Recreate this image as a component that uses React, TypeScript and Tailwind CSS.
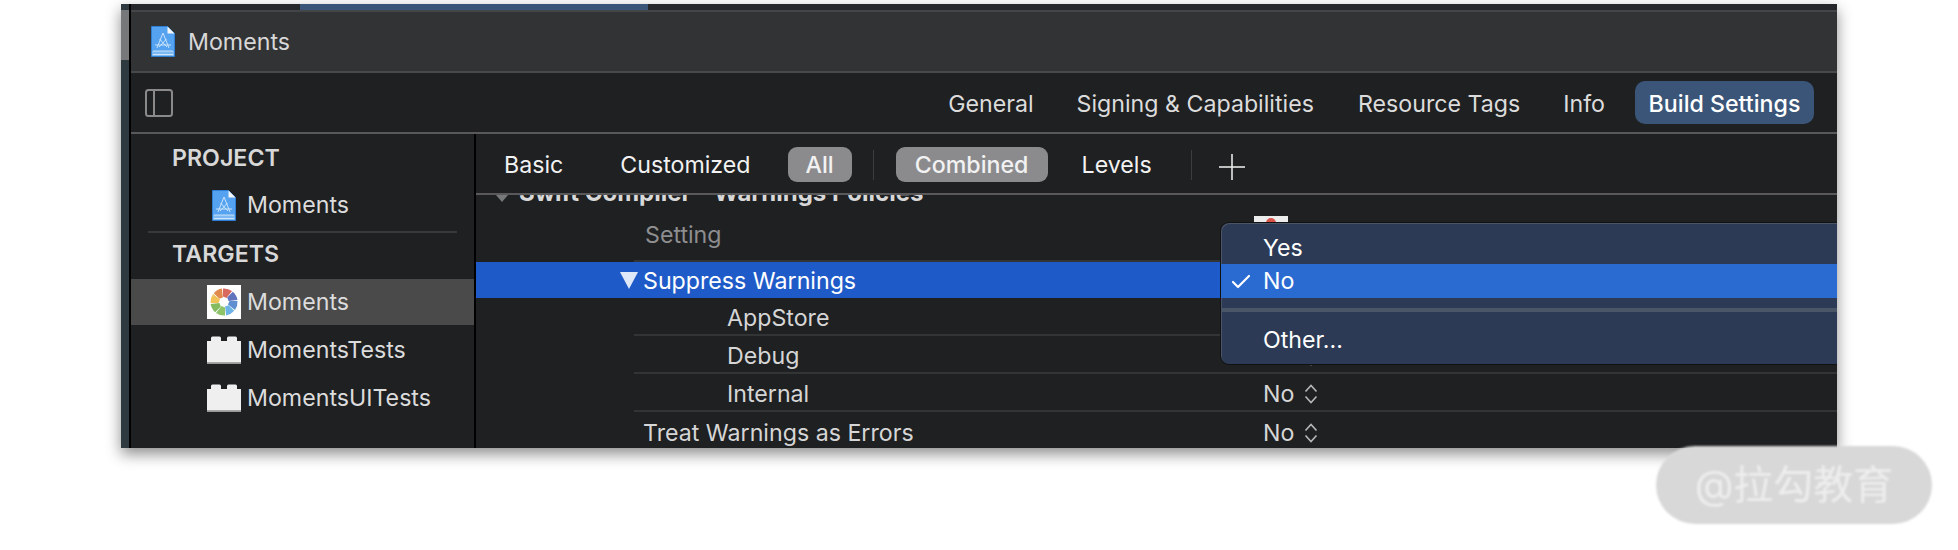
import { Check } from 'lucide-react'

const FONT = { fontFamily: 'Inter, "Noto Sans CJK SC", sans-serif' }

function ProjectIcon() {
  return (
    <svg width="24" height="31" viewBox="0 0 24 31" className="shrink-0">
      <path d="M0.5 0.500h16l7 7v23h-23z" fill="#55a3f0" stroke="#2f7fd6" />
      <path d="M16.500 0.500v7h7z" fill="#f4f6f8" />
      <path d="M1 25h22v5H1z" fill="#7cb9f3" />
      <path d="M2 25h20M2 28.500h20" stroke="#e3f0fc" strokeWidth="0.800" />
      <path d="M12 7 6 22M12 7l6 15M4 19h16M8.500 13l7.500 8M15.500 13 8 21" stroke="#d6e9fb" strokeWidth="0.900" fill="none" />
    </svg>
  )
}

function ApertureIcon() {
  const colors = ['#d9695f', '#6274bd', '#5f8fd0', '#6db3e6', '#8fc46b', '#85bb60', '#efc357', '#e08a4e']
  return (
    <div className="flex h-[34px] w-[34px] shrink-0 items-center justify-center bg-white">
      <svg width="28" height="28" viewBox="-14 -14 28 28">
        {colors.map((c, i) => (
          <path
            key={c}
            d="M-1 -13.500A13.800 13.800 0 0 1 8 -11L2.500 -4L-1 -5.500z"
            fill={c}
            transform={`rotate(${i * 45})`}
          />
        ))}
      </svg>
    </div>
  )
}

function LegoIcon() {
  return (
    <svg width="34" height="28" viewBox="0 0 34 28" className="shrink-0">
      <path d="M4 5V2a1.500 1.500 0 0 1 1.500-1.500h7A1.500 1.500 0 0 1 14 2v3h6V2a1.500 1.500 0 0 1 1.500-1.500h7A1.500 1.500 0 0 1 30 2v3h4v22.500H0V5z" fill="#efefef" />
      <path d="M0 26.800h34" stroke="#a8a8a8" strokeWidth="1.400" />
    </svg>
  )
}

function UpDown() {
  return (
    <svg width="16" height="22" viewBox="0 0 16 22" fill="none" stroke="#b8b8b8" strokeWidth="1.600" className="shrink-0">
      <path d="M2.500 8.500 8 2.500l5.500 6M2.500 13.500 8 19.500l5.500-6" />
    </svg>
  )
}

function SidebarRow({ icon, label, active }: { icon: React.ReactNode; label: string; active?: boolean }) {
  return (
    <div className={`flex h-[46px] items-center gap-[6px] pl-[76px] ${active ? 'bg-[#4a4a4a]' : ''}`}>
      {icon}
      <span className="pt-[1px] text-[23.200px] text-[#dcdcdc]">{label}</span>
    </div>
  )
}

function SettingRow({ label, value, indent, line, stepper }: { label: string; value?: string; indent?: boolean; line?: boolean; stepper?: boolean }) {
  return (
    <div className={`ml-[158px] flex h-[38px] shrink-0 items-center ${line ? 'border-b-2 border-[#333436]' : ''}`}>
      <span className={`w-[629px] pt-[4px] text-[23.200px] text-[#d6d6d6] ${indent ? 'pl-[93px]' : 'pl-[9px]'}`}>{label}</span>
      <span className="flex w-[56px] items-center justify-between pt-[4px] text-[23.200px] text-[#d6d6d6]">
        <span>{value}</span>
        {stepper && <UpDown />}
      </span>
    </div>
  )
}

export default function App() {
  return (
    <div className="relative h-[550px] w-[1958px] overflow-hidden bg-white" style={FONT}>
      <div className="ml-[121px] pt-[4px]">
        <div className="flex h-[444px] w-[1716px] overflow-hidden shadow-[0_6px_14px_rgba(0,0,0,0.45)]">
          {/* left edge strip */}
          <div className="flex w-[10px] shrink-0 flex-col border-r-2 border-black bg-[#2f3a40]">
            <div className="mt-[6px] h-[50px] bg-[#77787a]" />
          </div>

          <div className="flex min-w-0 flex-1 flex-col bg-[#1f2022]">
            {/* tab strip */}
            <div className="h-[8px] shrink-0 border-b-2 border-[#444547] bg-[#26272a]">
              <div className="ml-[169px] h-full w-[348px] bg-[#3a5578]" />
            </div>

            {/* title bar */}
            <div className="flex h-[61px] shrink-0 items-center gap-[13px] border-b-2 border-[#48494b] bg-[#323335] pl-[20px]">
              <ProjectIcon />
              <span className="pt-[2px] text-[23.200px] text-[#d8d8d8]">Moments</span>
            </div>

            {/* editor tabs */}
            <div className="flex h-[61px] shrink-0 items-center justify-between border-b-2 border-[#59595b] pl-[14px] pr-[23px]">
              <svg width="28" height="28" viewBox="0 0 28 28" fill="none" stroke="#8a8a8a" strokeWidth="2">
                <rect x="1" y="1" width="26" height="26" rx="2.500" />
                <path d="M9 1v26" />
              </svg>
              <div className="flex items-center text-[23.200px] text-[#dcdcdc]">
                <span className="pt-[4px]">General</span>
                <span className="ml-[43px] pt-[4px]">Signing &amp; Capabilities</span>
                <span className="ml-[44px] pt-[4px]">Resource Tags</span>
                <span className="ml-[43px] pt-[4px]">Info</span>
                <span className="ml-[30px] flex h-[43px] w-[179px] items-center justify-center rounded-[10px] bg-[#3a5578] pt-[3px] font-medium text-white">
                  Build Settings
                </span>
              </div>
            </div>

            <div className="flex min-h-0 flex-1">
              {/* navigator */}
              <div className="w-[345px] shrink-0 border-r-2 border-black">
                <div className="pl-[41px] pt-[10px] text-[23.200px] font-semibold leading-[28px] text-[#d8d8d8]">PROJECT</div>
                <div className="flex h-[54px] items-center gap-[11px] pl-[81px] pt-[12px]">
                  <ProjectIcon />
                  <span className="pt-[1px] text-[23.200px] text-[#dcdcdc]">Moments</span>
                </div>
                <div className="mx-[17px] mt-[5px] h-[2px] bg-[#38393b]" />
                <div className="pl-[41px] pt-[7px] text-[23.200px] font-semibold leading-[28px] text-[#d8d8d8]">TARGETS</div>
                <div className="mt-[11px]">
                  <SidebarRow icon={<ApertureIcon />} label="Moments" active />
                </div>
                <div className="mt-[2px]">
                  <SidebarRow icon={<LegoIcon />} label="MomentsTests" />
                </div>
                <div className="mt-[2px]">
                  <SidebarRow icon={<LegoIcon />} label="MomentsUITests" />
                </div>
              </div>

              {/* build settings */}
              <div className="flex min-w-0 flex-1 flex-col">
                <div className="flex h-[61px] shrink-0 items-center border-b-2 border-[#59595b] pl-[28px] pt-[2px] text-[23.200px] text-[#f2f2f2]">
                  <span className="pt-[2px]">Basic</span>
                  <span className="ml-[57px] pt-[2px]">Customized</span>
                  <span className="ml-[37px] flex h-[35px] w-[64px] items-center justify-center rounded-[9px] bg-[#8b8b8e] pt-[1px] font-medium">All</span>
                  <span className="ml-[21px] h-[30px] w-[1px] bg-[#3c3d3f]" />
                  <span className="ml-[22px] flex h-[35px] w-[152px] items-center justify-center rounded-[9px] bg-[#8b8b8e] pt-[1px] font-medium">Combined</span>
                  <span className="ml-[34px] pt-[2px]">Levels</span>
                  <span className="ml-[39px] h-[30px] w-[1px] bg-[#3c3d3f]" />
                  <svg width="26" height="26" viewBox="0 0 26 26" stroke="#f2f2f2" strokeWidth="1.500" className="ml-[27px] mt-[4px]">
                    <path d="M13 0v26M0 13h26" />
                  </svg>
                </div>

                <div className="flex min-h-0 flex-1 flex-col overflow-hidden">
                  {/* heading clipped by the filter bar */}
                  <div className="-mt-[15px] flex h-[26px] shrink-0 items-center text-[24px] font-bold text-[#d8d8d8]">
                    <span className="ml-[20px] mr-[11px] mt-[10px] h-0 w-0 border-x-[6px] border-t-[7px] border-x-transparent border-t-[#77787a]" />
                    Swift Compiler - Warnings Policies
                  </div>
                  <div className="ml-[158px] flex h-[56px] shrink-0 items-center border-b-2 border-[#333436] pl-[11px] pt-[5px] text-[23.200px] text-[#8e8e90]">
                    Setting
                  </div>
                  <div className="flex h-[36px] shrink-0 items-center bg-[#1f5bc8] pl-[144px] text-[23.200px] text-white">
                    <span className="mr-[5px] h-0 w-0 border-x-[9px] border-t-[17px] border-x-transparent border-t-[#dfe8f8]" />
                    <span className="pt-[2px]">Suppress Warnings</span>
                  </div>
                  <SettingRow label="AppStore" indent line />
                  <SettingRow label="Debug" indent line stepper />
                  <SettingRow label="Internal" indent line value="No" stepper />
                  <SettingRow label="Treat Warnings as Errors" value="No" stepper />
                </div>
              </div>
            </div>
          </div>
        </div>
      </div>

      {/* icon peeking out above the popup */}
      <div className="absolute left-[1254px] top-[216px] h-[8px] w-[34px] bg-[#ececec]">
        <div className="mx-auto mt-[2px] h-[6px] w-[10px] rounded-t-full bg-[#d9534a]" />
      </div>

      {/* popup menu */}
      <div className="absolute left-[1220px] top-[222px] flex h-[143px] w-[617px] flex-col overflow-hidden rounded-l-[9px] border border-r-0 border-[#111] bg-[#2c3a55] text-[23.200px] text-white shadow-[inset_1px_1px_0_#4b5568]">
        <div className="flex h-[41px] shrink-0 items-center pl-[42px] pt-[9px]">Yes</div>
        <div className="relative flex h-[34px] shrink-0 items-center bg-[#2a6bd2] pl-[42px] pt-[1px]">
          <Check size={24} strokeWidth={2.200} className="absolute left-[8px]" />
          No
        </div>
        <div className="mt-[10px] h-[4px] shrink-0 bg-[#4a5568]" />
        <div className="flex h-[54px] shrink-0 items-center pl-[42px] pt-[2px]">Other...</div>
      </div>

      {/* watermark */}
      <div className="absolute left-[1656px] top-[446px] flex h-[78px] w-[276px] items-center justify-center rounded-full bg-[#d8d8d8] text-[40px] text-[#eeeeee] blur-[0.8px]">
        @拉勾教育
      </div>
    </div>
  )
}
